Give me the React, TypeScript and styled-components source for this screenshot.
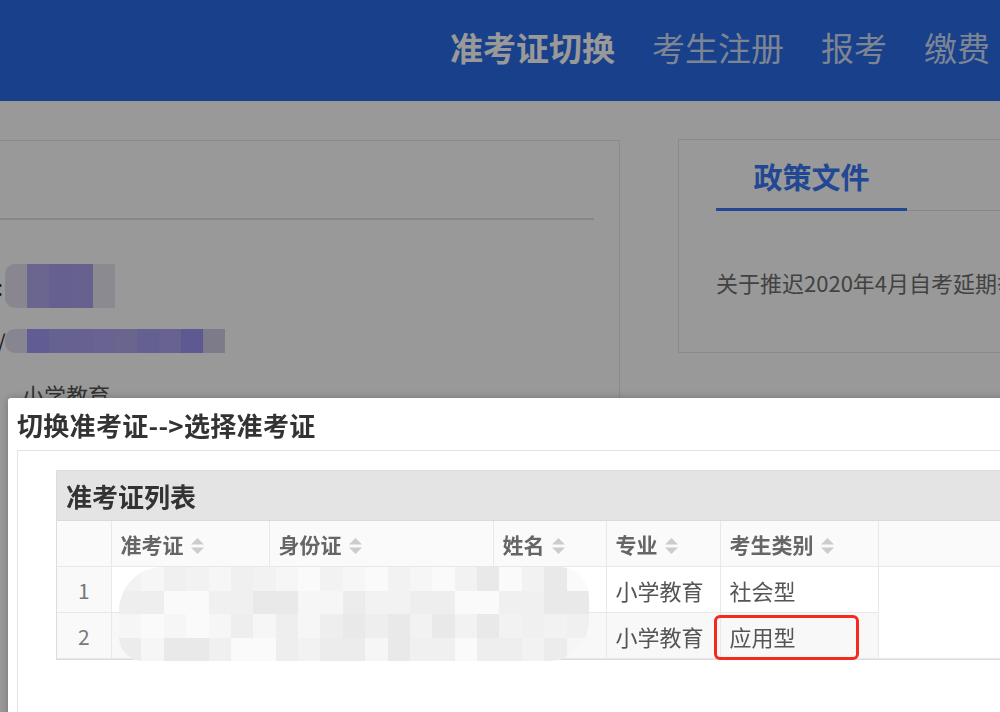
import React from 'react';
import styled, { createGlobalStyle } from 'styled-components';

const GlobalStyle = createGlobalStyle`
  html, body {
    margin: 0;
    padding: 0;
    height: 100%;
    overflow: hidden;
    background: #ffffff;
    font-family: "Noto Sans CJK SC", "Noto Sans", "Liberation Sans", sans-serif;
  }
  #root {
    height: 100%;
  }
`;

const Page = styled.div`
  height: 100%;
  background: #ffffff;
`;

const Header = styled.header`
  height: 101px;
  background: #2a6be6;
  display: flex;
  align-items: center;
  justify-content: flex-end;
  padding: 0 10px 6px 0;
  box-sizing: border-box;
  gap: 37px;
`;

const NavItem = styled.span<{ $active?: boolean }>`
  font-size: 33px;
  line-height: 1;
  color: ${(p) => (p.$active ? '#ffffff' : 'rgba(255, 255, 255, 0.78)')};
  font-weight: ${(p) => (p.$active ? 700 : 400)};
`;

const Content = styled.main`
  display: grid;
  grid-template-columns: 620px 1fr;
  gap: 58px;
  padding-top: 38px;
  align-items: start;
`;

const LeftPanel = styled.section`
  margin-top: 1px;
  border: 1px solid #e6e6e6;
  border-left: none;
  height: 620px;
`;

const PanelHead = styled.div`
  height: 77px;
  margin-right: 25px;
  border-bottom: 2px solid #e2e2e2;
`;

const InfoList = styled.div`
  display: flex;
  flex-direction: column;
  padding-top: 44px;
`;

const InfoRow = styled.div<{ $h: number; $gap: number }>`
  display: flex;
  align-items: center;
  height: ${(p) => p.$h}px;
  margin-bottom: ${(p) => p.$gap}px;
`;

const Colon = styled.span`
  width: 8px;
  margin-left: -3px;
  font-size: 22px;
  color: #333;
`;

const Mosaic = styled.div`
  display: flex;
  height: 100%;
  border-radius: 10px 0 0 10px;
  overflow: hidden;
`;

const Tile = styled.div<{ $c: string; $w?: number }>`
  width: ${(p) => p.$w ?? 22}px;
  height: 100%;
  background: ${(p) => p.$c};
`;

const InfoText = styled.span`
  padding-left: 22px;
  font-size: 22px;
  color: #555;
`;

const RightPanel = styled.section`
  height: 214px;
  border: 1px solid #e6e6e6;
  border-right: none;
  box-sizing: border-box;
  padding: 0 0 0 37px;
`;

const TabBar = styled.div`
  display: flex;
  margin-top: 22px;
  border-bottom: 1px solid #e2e2e2;
`;

const Tab = styled.div`
  width: 191px;
  text-align: center;
  font-size: 29px;
  font-weight: 700;
  color: #3b78f5;
  line-height: 1;
  padding-bottom: 17px;
  border-bottom: 3px solid #3b78f5;
  margin-bottom: -1px;
`;

const NewsLine = styled.p`
  margin: 55px 0 0;
  font-size: 22px;
  color: #6e6e6e;
  white-space: nowrap;
`;

const Overlay = styled.div`
  position: fixed;
  inset: 0;
  background: rgba(0, 0, 0, 0.4);
`;

const Modal = styled.div`
  position: fixed;
  left: 8px;
  top: 398px;
  width: 1200px;
  height: 420px;
  background: #ffffff;
  border-radius: 3px;
  box-shadow: 0 0 8px rgba(0, 0, 0, 0.25);
  display: flex;
  flex-direction: column;
`;

const ModalTitle = styled.div`
  height: 52px;
  display: flex;
  align-items: center;
  padding-left: 9px;
  font-size: 26px;
  font-weight: 700;
  color: #333;
  letter-spacing: 0.3px;
`;

const ModalBody = styled.div`
  flex: 1;
  margin-left: 9px;
  border: 1px solid #e3e3e3;
  padding: 19px 0 0 38px;
`;

const TablePanel = styled.div`
  position: relative;
  width: 1100px;
  border: 1px solid #dcdcdc;
`;

const TableCaption = styled.div`
  height: 49px;
  display: flex;
  align-items: center;
  padding-left: 9px;
  background: #e4e4e4;
  border-bottom: 1px solid #dadada;
  font-size: 26px;
  font-weight: 700;
  color: #333;
`;

const Grid = styled.table`
  border-collapse: collapse;
  table-layout: fixed;
  width: 100%;
`;

const HeadCell = styled.th`
  height: 45px;
  padding: 0 9px;
  background: #fafafa;
  border: 1px solid #e8e8e8;
  border-top: none;
  text-align: left;
  font-size: 21px;
  font-weight: 700;
  color: #666;
  white-space: nowrap;
`;

const SortIcon = styled.svg`
  width: 15px;
  height: 18px;
  margin-left: 6px;
  vertical-align: -2px;
`;

const Cell = styled.td<{ $striped?: boolean }>`
  position: relative;
  height: 45px;
  padding: 0 9px;
  border: 1px solid #e8e8e8;
  background: ${(p) => (p.$striped ? '#f8f8f8' : '#ffffff')};
  font-size: 22px;
  color: #555;
  white-space: nowrap;
`;

const IndexCell = styled(Cell)`
  text-align: center;
  color: #777;
  background: #f9f9f9;
  border-left: none;
  font-size: 21px;
`;

const BlankCell = styled.td`
  border: 1px solid #e8e8e8;
  border-right: none;
  background: #ffffff;
`;

const Highlight = styled.div`
  position: absolute;
  left: -7px;
  right: 19px;
  top: 2px;
  bottom: -2px;
  border: 3px solid #f52a1e;
  border-radius: 6px;
  pointer-events: none;
`;

const Redaction = styled.div`
  position: absolute;
  left: 62px;
  top: 96px;
  width: 470px;
  height: 94px;
  display: grid;
  grid-template-columns: repeat(21, 1fr);
  grid-auto-rows: 1fr;
  border-radius: 44px 30px 40px 24px;
  overflow: hidden;
  filter: blur(0.6px);
  background: #f8f8f8;
`;

const Block = styled.div<{ $c: string }>`
  background: ${(p) => p.$c};
`;

const shades = ['#f2f2f2', '#ececec', '#f6f6f6', '#e9e9e9', '#f0f0f0', '#fafafa', '#eeeeee'];
const blocks = Array.from({ length: 21 * 4 }, (_, i) => {
  const row = Math.floor(i / 21);
  const col = i % 21;
  const h = (col * 37 + row * 53 + col * row * 11) % 97;
  const base = row === 0 || row === 2 ? 0 : 2;
  return shades[(h + base) % shades.length];
});

const purpleA = ['#e4e0ee', '#b2aaf0', '#a8a0f0', '#aaa2ee', '#e8e6f2'];
const purpleB = ['#e0def0', '#a29af5', '#aaa3f0', '#aaa2f2', '#aea6f0', '#b0a9ed', '#a8a0f3', '#aca4f0', '#9d95f5', '#d0cde6'];

const Sort = () => (
  <SortIcon viewBox="0 0 15 18">
    <polygon points="7.5,1 14,7.5 1,7.5" fill="#cccccc" />
    <polygon points="1,10.5 14,10.5 7.5,17" fill="#cccccc" />
  </SortIcon>
);

const columns = [
  { key: 'idx', label: '', width: 54 },
  { key: 'ticket', label: '准考证', width: 158 },
  { key: 'id', label: '身份证', width: 224 },
  { key: 'name', label: '姓名', width: 113 },
  { key: 'major', label: '专业', width: 114 },
  { key: 'type', label: '考生类别', width: 158 },
];

const rows = [
  { major: '小学教育', type: '社会型' },
  { major: '小学教育', type: '应用型', marked: true },
];

const App = () => (
  <Page>
    <GlobalStyle />
    <Header>
      <NavItem $active>准考证切换</NavItem>
      <NavItem>考生注册</NavItem>
      <NavItem>报考</NavItem>
      <NavItem>缴费</NavItem>
    </Header>
    <Content>
      <LeftPanel>
        <PanelHead />
        <InfoList>
          <InfoRow $h={44} $gap={21}>
            <Colon>:</Colon>
            <Mosaic>
              {purpleA.map((c, i) => (
                <Tile key={i} $c={c} />
              ))}
            </Mosaic>
          </InfoRow>
          <InfoRow $h={24} $gap={26}>
            <Colon>/</Colon>
            <Mosaic>
              {purpleB.map((c, i) => (
                <Tile key={i} $c={c} />
              ))}
            </Mosaic>
          </InfoRow>
          <InfoRow $h={30} $gap={0}>
            <InfoText>小学教育</InfoText>
          </InfoRow>
        </InfoList>
      </LeftPanel>
      <RightPanel>
        <TabBar>
          <Tab>政策文件</Tab>
        </TabBar>
        <NewsLine>关于推迟2020年4月自考延期举行的通知</NewsLine>
      </RightPanel>
    </Content>
    <Overlay />
    <Modal>
      <ModalTitle>切换准考证--&gt;选择准考证</ModalTitle>
      <ModalBody>
        <TablePanel>
          <TableCaption>准考证列表</TableCaption>
          <Grid>
            <colgroup>
              {columns.map((c) => (
                <col key={c.key} style={{ width: c.width }} />
              ))}
              <col />
            </colgroup>
            <thead>
              <tr>
                {columns.map((c) => (
                  <HeadCell key={c.key} style={c.key === 'idx' ? { borderLeft: 'none' } : undefined}>
                    {c.label}
                    {c.label && <Sort />}
                  </HeadCell>
                ))}
                <HeadCell style={{ borderRight: 'none' }} />
              </tr>
            </thead>
            <tbody>
              {rows.map((r, i) => (
                <tr key={i}>
                  <IndexCell>{i + 1}</IndexCell>
                  <Cell $striped={i === 1} />
                  <Cell $striped={i === 1} />
                  <Cell $striped={i === 1} />
                  <Cell $striped={i === 1}>{r.major}</Cell>
                  <Cell $striped={i === 1}>
                    {r.type}
                    {r.marked && <Highlight />}
                  </Cell>
                  {i === 0 && <BlankCell rowSpan={2} />}
                </tr>
              ))}
            </tbody>
          </Grid>
          <Redaction>
            {blocks.map((c, i) => (
              <Block key={i} $c={c} />
            ))}
          </Redaction>
        </TablePanel>
      </ModalBody>
    </Modal>
  </Page>
);

export default App;
